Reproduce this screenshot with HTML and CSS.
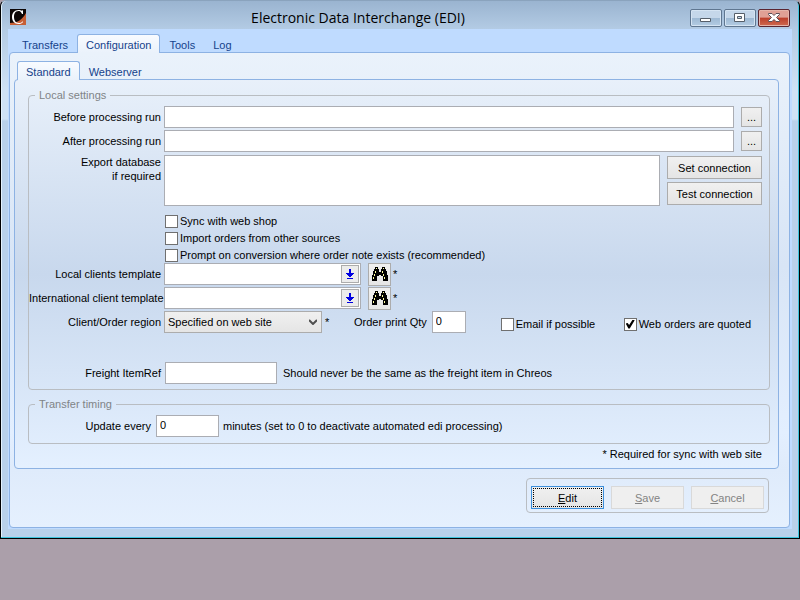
FILE: index.html
```html
<!DOCTYPE html>
<html lang="en">
<head>
<meta charset="utf-8">
<meta name="viewport" content="width=device-width, initial-scale=1">
<title>Electronic Data Interchange (EDI)</title>
<link rel="stylesheet" href="styles.css">
</head>
<body>
<svg width="0" height="0" class="defs">
  <symbol id="binoculars" viewBox="0 0 16 14">
    <path d="M3 0h3v2h1v3h2V2h1V0h3v2h1v2h1v4h1v6h-5V9H9V8H7v1H5v5H0V8h1V4h1V2h1z"/>
    <path fill="#ffffa0" d="M4 1h1v1H4zM11 1h1v1h-1zM3 4h1v2H3zM2 7h1v2H2zM1 10h1v2H1zM10 4h1v2h-1zM11 7h1v2h-1zM12 10h1v2h-1z"/>
  </symbol>
  <symbol id="down" viewBox="0 0 8 10">
    <path fill="#0000e0" d="M3 0h2v4h3v1H7v1H6v1H5v1H3V7H2V6H1V5H0V4h3zM1 9h6v1H1z"/>
  </symbol>
</svg>

<div class="window">
  <header class="titlebar">
    <svg class="logo" width="16" height="16" viewBox="0 0 16 16">
      <path fill="#0c0605" d="M0 0h16v16H0z"/>
      <path fill="#c65f35" d="M16 4v12H0v-2c7 0 12-3 16-10z"/>
      <path fill="#fff" d="M13 1v4h-1C11 2.500 9.500 2 8.500 2 5 2 4 5 4 8s1.500 6 5 6c1.500 0 3-.5 4-2v1c-1 1.500-2.500 2-4.500 2C4.500 15 2 12 2 8s2.500-7 6.500-7c1.500 0 2.500.5 3.500.7z"/>
    </svg>
    <h1>Electronic Data Interchange (EDI)</h1>
    <div class="winbtns">
      <button type="button" aria-label="Minimize"><svg width="12" height="10" viewBox="0 0 12 10"><path fill="#fff" stroke="#555e69" d="M.5 5.500h10v3H.5z"/></svg></button>
      <button type="button" aria-label="Maximize"><svg width="12" height="10" viewBox="0 0 12 10"><path fill="#fff" fill-rule="evenodd" stroke="#555e69" d="M.5.5h10v8H.5zM3.500 3.500h4v2h-4z"/></svg></button>
      <button type="button" class="close" aria-label="Close"><svg width="12" height="10" viewBox="0 0 12 10"><path fill="#fff" stroke="#5c5058" d="M.5.5h3.500L6 2.500 8 .5h3.500v1L8.500 4.500l3 3v1H8L6 6.500 4 8.500H.5v-1l3-3-3-3z"/></svg></button>
    </div>
  </header>

  <main class="client">
    <nav class="tabs">
      <a href="#">Transfers</a>
      <a href="#" class="on">Configuration</a>
      <a href="#">Tools</a>
      <a href="#">Log</a>
    </nav>
    <form class="page">
      <nav class="tabs">
        <a href="#" class="on">Standard</a>
        <a href="#">Webserver</a>
      </nav>
      <div class="panel">
        <fieldset class="local">
          <legend>Local settings</legend>
          <div class="row">
            <label for="before">Before processing run</label>
            <input type="text" id="before" class="grow">
            <button type="button" class="dots" aria-label="Browse before run">...</button>
          </div>
          <div class="row">
            <label for="after">After processing run</label>
            <input type="text" id="after" class="grow">
            <button type="button" class="dots" aria-label="Browse after run">...</button>
          </div>
          <div class="row export">
            <label for="export">Export database<br>if required</label>
            <textarea id="export" class="grow"></textarea>
            <div class="stack">
              <button type="button">Set connection</button>
              <button type="button">Test connection</button>
            </div>
          </div>
          <div class="checks">
            <label class="check"><input type="checkbox">Sync with web shop</label>
            <label class="check"><input type="checkbox">Import orders from other sources</label>
            <label class="check"><input type="checkbox">Prompt on conversion where order note exists (recommended)</label>
          </div>
          <div class="row">
            <label for="localtpl">Local clients template</label>
            <div class="lookup">
              <input type="text" id="localtpl">
              <button type="button" aria-label="Open list"><svg width="8" height="10"><use href="#down"/></svg></button>
            </div>
            <button type="button" class="find" aria-label="Find"><svg width="16" height="14"><use href="#binoculars"/></svg></button>
            <span class="star">*</span>
          </div>
          <div class="row">
            <label for="intltpl">International client template</label>
            <div class="lookup">
              <input type="text" id="intltpl">
              <button type="button" aria-label="Open list"><svg width="8" height="10"><use href="#down"/></svg></button>
            </div>
            <button type="button" class="find" aria-label="Find"><svg width="16" height="14"><use href="#binoculars"/></svg></button>
            <span class="star">*</span>
          </div>
          <div class="row">
            <label for="region">Client/Order region</label>
            <div class="select">
              <select id="region"><option>Specified on web site</option></select>
              <svg width="8" height="6" viewBox="0 0 8 6"><path fill="none" stroke="#505050" stroke-width="2" d="M0 1l4 4 4-4"/></svg>
            </div>
            <span class="star">*</span>
            <label for="qty" class="qtylabel">Order print Qty</label>
            <input type="text" id="qty" value="0">
            <div class="flags">
              <label class="check"><input type="checkbox">Email if possible</label>
              <label class="check"><input type="checkbox" checked>Web orders are quoted</label>
            </div>
          </div>
          <div class="row freight">
            <label for="freight">Freight ItemRef</label>
            <input type="text" id="freight">
            <span>Should never be the same as the freight item in Chreos</span>
          </div>
        </fieldset>
        <fieldset class="timing">
          <legend>Transfer timing</legend>
          <div class="row">
            <label for="every">Update every</label>
            <input type="text" id="every" value="0">
            <span>minutes (set to 0 to deactivate automated edi processing)</span>
          </div>
        </fieldset>
        <p class="note">* Required for sync with web site</p>
      </div>
      <div class="actions">
        <button type="button" class="default"><u>E</u>dit</button>
        <button type="button" disabled><u>S</u>ave</button>
        <button type="button" disabled><u>C</u>ancel</button>
      </div>
    </form>
  </main>
</div>
</body>
</html>
```

FILE: styles.css
```css
* {
  box-sizing: border-box;
}
body {
  margin: 0;
  background: #ab9faa;
  color: #000;
  font: 11px/14px "Liberation Sans", Arial, sans-serif;
}
.defs {
  position: absolute;
}
button, input, select, textarea {
  margin: 0;
  font: inherit;
  color: inherit;
}

/* window frame */
.window {
  border: 1px solid #000;
  border-top-color: #8aa3bd;
  border-radius: 6px 6px 0 0;
  padding: 0 7px 9px;
  background: linear-gradient(#9ab4d0, #b3cbe4 28px, #cfe2f5 90px, #cfe2f5 118px, #b9d1ea 120px);
  box-shadow: inset -1px -1px #3fc4dc, inset 1px 0 #e4f2fc;
}
.titlebar {
  display: flex;
  align-items: center;
  height: 28px;
}
.logo {
  margin: 4px 0 0 2px;
}
h1 {
  flex: 1;
  margin: 5px 0 0;
  font: 14px/20px "Open Sans", "Noto Sans", sans-serif;
  text-align: center;
}
.winbtns {
  display: flex;
  gap: 2px;
  margin: 5px 2px 0 0;
}
.winbtns button {
  display: flex;
  align-items: center;
  justify-content: center;
  width: 32px;
  height: 18px;
  padding: 0;
  border: 1px solid #5f7690;
  border-radius: 2px;
  background: linear-gradient(#c5d7ea 50%, #9db8d3 50%, #b4cce3);
  box-shadow: inset 0 0 0 1px #d5e4f3;
}
.winbtns .close {
  border-color: #5a2530;
  background: linear-gradient(#e0a095 45%, #bc3f2b 50%, #cf6a50);
  box-shadow: inset 0 0 0 1px #e5b5aa;
}

/* tabs */
.client {
  padding: 5px 2px 1px 1px;
  background: #bfdbff;
}
.tabs {
  display: flex;
  padding-left: 4px;
}
.page .tabs {
  padding-left: 3px;
}
.tabs a {
  height: 18px;
  padding: 2px 8px 0;
  border: 1px solid transparent;
  border-bottom: 0;
  border-radius: 3px 3px 0 0;
  color: #15428b;
  line-height: 16px;
  text-decoration: none;
}
.tabs .on {
  z-index: 1;
  height: 19px;
  margin-bottom: -1px;
  border-color: #8db2e3;
  background: linear-gradient(#f8fbff, #eaf2fb);
}
.page {
  display: flex;
  flex-direction: column;
  padding: 8px 10px 14px 4px;
  border: 1px solid #8db2e3;
  border-radius: 4px;
  background: linear-gradient(#eaf2fb, #d8e5f6 45%, #e3efff 80%, #dfebfb 88%, #e5f0fe);
}
.panel {
  padding: 8px 8px 7px 13px;
  border: 1px solid #8db2e3;
  border-radius: 4px;
  background: linear-gradient(#e8f0fa, #c8d8ed 50%, #e4f0ff);
}

/* groups */
fieldset {
  min-width: 0;
  margin: 0;
  border: 1px solid #b9bdc2;
  border-radius: 4px;
}
legend {
  height: 14px;
  margin-left: 6px;
  padding: 0 4px;
  color: #808487;
}
.local {
  padding: 4px 7px 5px 0;
}
.timing {
  margin-top: 7px;
  padding: 4px 7px 6px 0;
}
.row {
  display: flex;
  align-items: center;
  height: 22px;
  margin-bottom: 2px;
}
.row > label:first-child {
  flex: none;
  width: 132px;
  margin-right: 3px;
  text-align: right;
  white-space: nowrap;
}
input[type=text], textarea {
  height: 22px;
  padding: 0 3px 2px;
  border: 1px solid #abadb3;
  border-radius: 0;
  background: #fff;
}
.grow {
  flex: 1;
  min-width: 0;
}
.row > button, .stack button, .actions button {
  padding: 0;
  border: 1px solid #acacac;
  background: linear-gradient(#f0f0f0, #e5e5e5);
}
.dots {
  width: 21px;
  height: 20px;
  margin-left: 7px;
}
.row.export {
  align-items: flex-start;
  height: 51px;
  margin-top: 3px;
}
.export textarea {
  height: 51px;
  resize: none;
}
.stack {
  display: grid;
  gap: 3px;
  margin: 1px 0 0 7px;
}
.stack button {
  width: 95px;
  height: 23px;
}

.checks {
  display: grid;
  justify-items: start;
  gap: 3px;
  margin: 8px 0 1px 136px;
}
.check {
  display: flex;
  align-items: center;
  gap: 2px;
  white-space: nowrap;
}
input[type=checkbox] {
  appearance: none;
  width: 13px;
  height: 13px;
  border: 1px solid #707070;
  background: #fff;
}
input[type=checkbox]:checked::before {
  content: "";
  display: block;
  width: 9px;
  height: 9px;
  margin: 1px;
  background: #000;
  clip-path: polygon(0 45%, 22% 38%, 38% 60%, 78% 0, 100% 8%, 45% 100%, 30% 100%);
}

.lookup {
  display: flex;
  align-items: center;
  width: 197px;
  height: 22px;
  padding-right: 1px;
  border: 1px solid #abadb3;
  background: #fff;
}
.lookup input[type=text] {
  flex: 1;
  min-width: 0;
  height: 20px;
  border: 0;
}
.lookup button, .find {
  display: flex;
  align-items: center;
  justify-content: center;
}
.lookup button {
  width: 18px;
  height: 18px;
  padding: 0;
  border: 1px solid #acacac;
  background: #ececec;
}
.find {
  width: 23px;
  height: 23px;
  margin-left: 7px;
}
.star {
  width: 5px;
  margin-left: 2px;
}
.select {
  position: relative;
  width: 158px;
}
.select select {
  appearance: none;
  display: block;
  width: 100%;
  height: 22px;
  padding: 0 3px;
  border: 1px solid #acacac;
  border-radius: 0;
  background: linear-gradient(#f0f0f0, #e5e5e5);
}
.select svg {
  position: absolute;
  top: 8px;
  right: 5px;
  pointer-events: none;
}
.select + .star {
  margin-left: 3px;
}
.qtylabel {
  margin: 0 5px 0 24px;
}
#qty {
  width: 34px;
}
.flags {
  display: flex;
  flex: 1;
  justify-content: space-between;
  margin: 4px 11px 0 35px;
}
.row.freight {
  margin: 29px 0 0;
}
#freight {
  width: 112px;
  margin-left: 1px;
}
.freight span {
  margin-left: 6px;
}
.timing .row {
  margin: 0;
}
.timing .row > label {
  width: 122px;
  margin-right: 5px;
}
#every {
  width: 63px;
  margin-right: 4px;
}
.note {
  margin: 3px 8px 0;
  text-align: right;
}

.actions {
  display: flex;
  gap: 7px;
  align-self: flex-end;
  margin: 9px 10px 0 0;
  padding: 7px 4px 3px;
  border: 1px solid #b9bdc2;
  border-radius: 4px;
}
.actions button {
  width: 73px;
  height: 23px;
}
.actions .default {
  border-color: #3c8fdc;
  outline: 1px dotted #000;
  outline-offset: -3px;
}
.actions button:disabled {
  border-color: #d9d9d9;
  background: #efefef;
  color: #838383;
}
```
